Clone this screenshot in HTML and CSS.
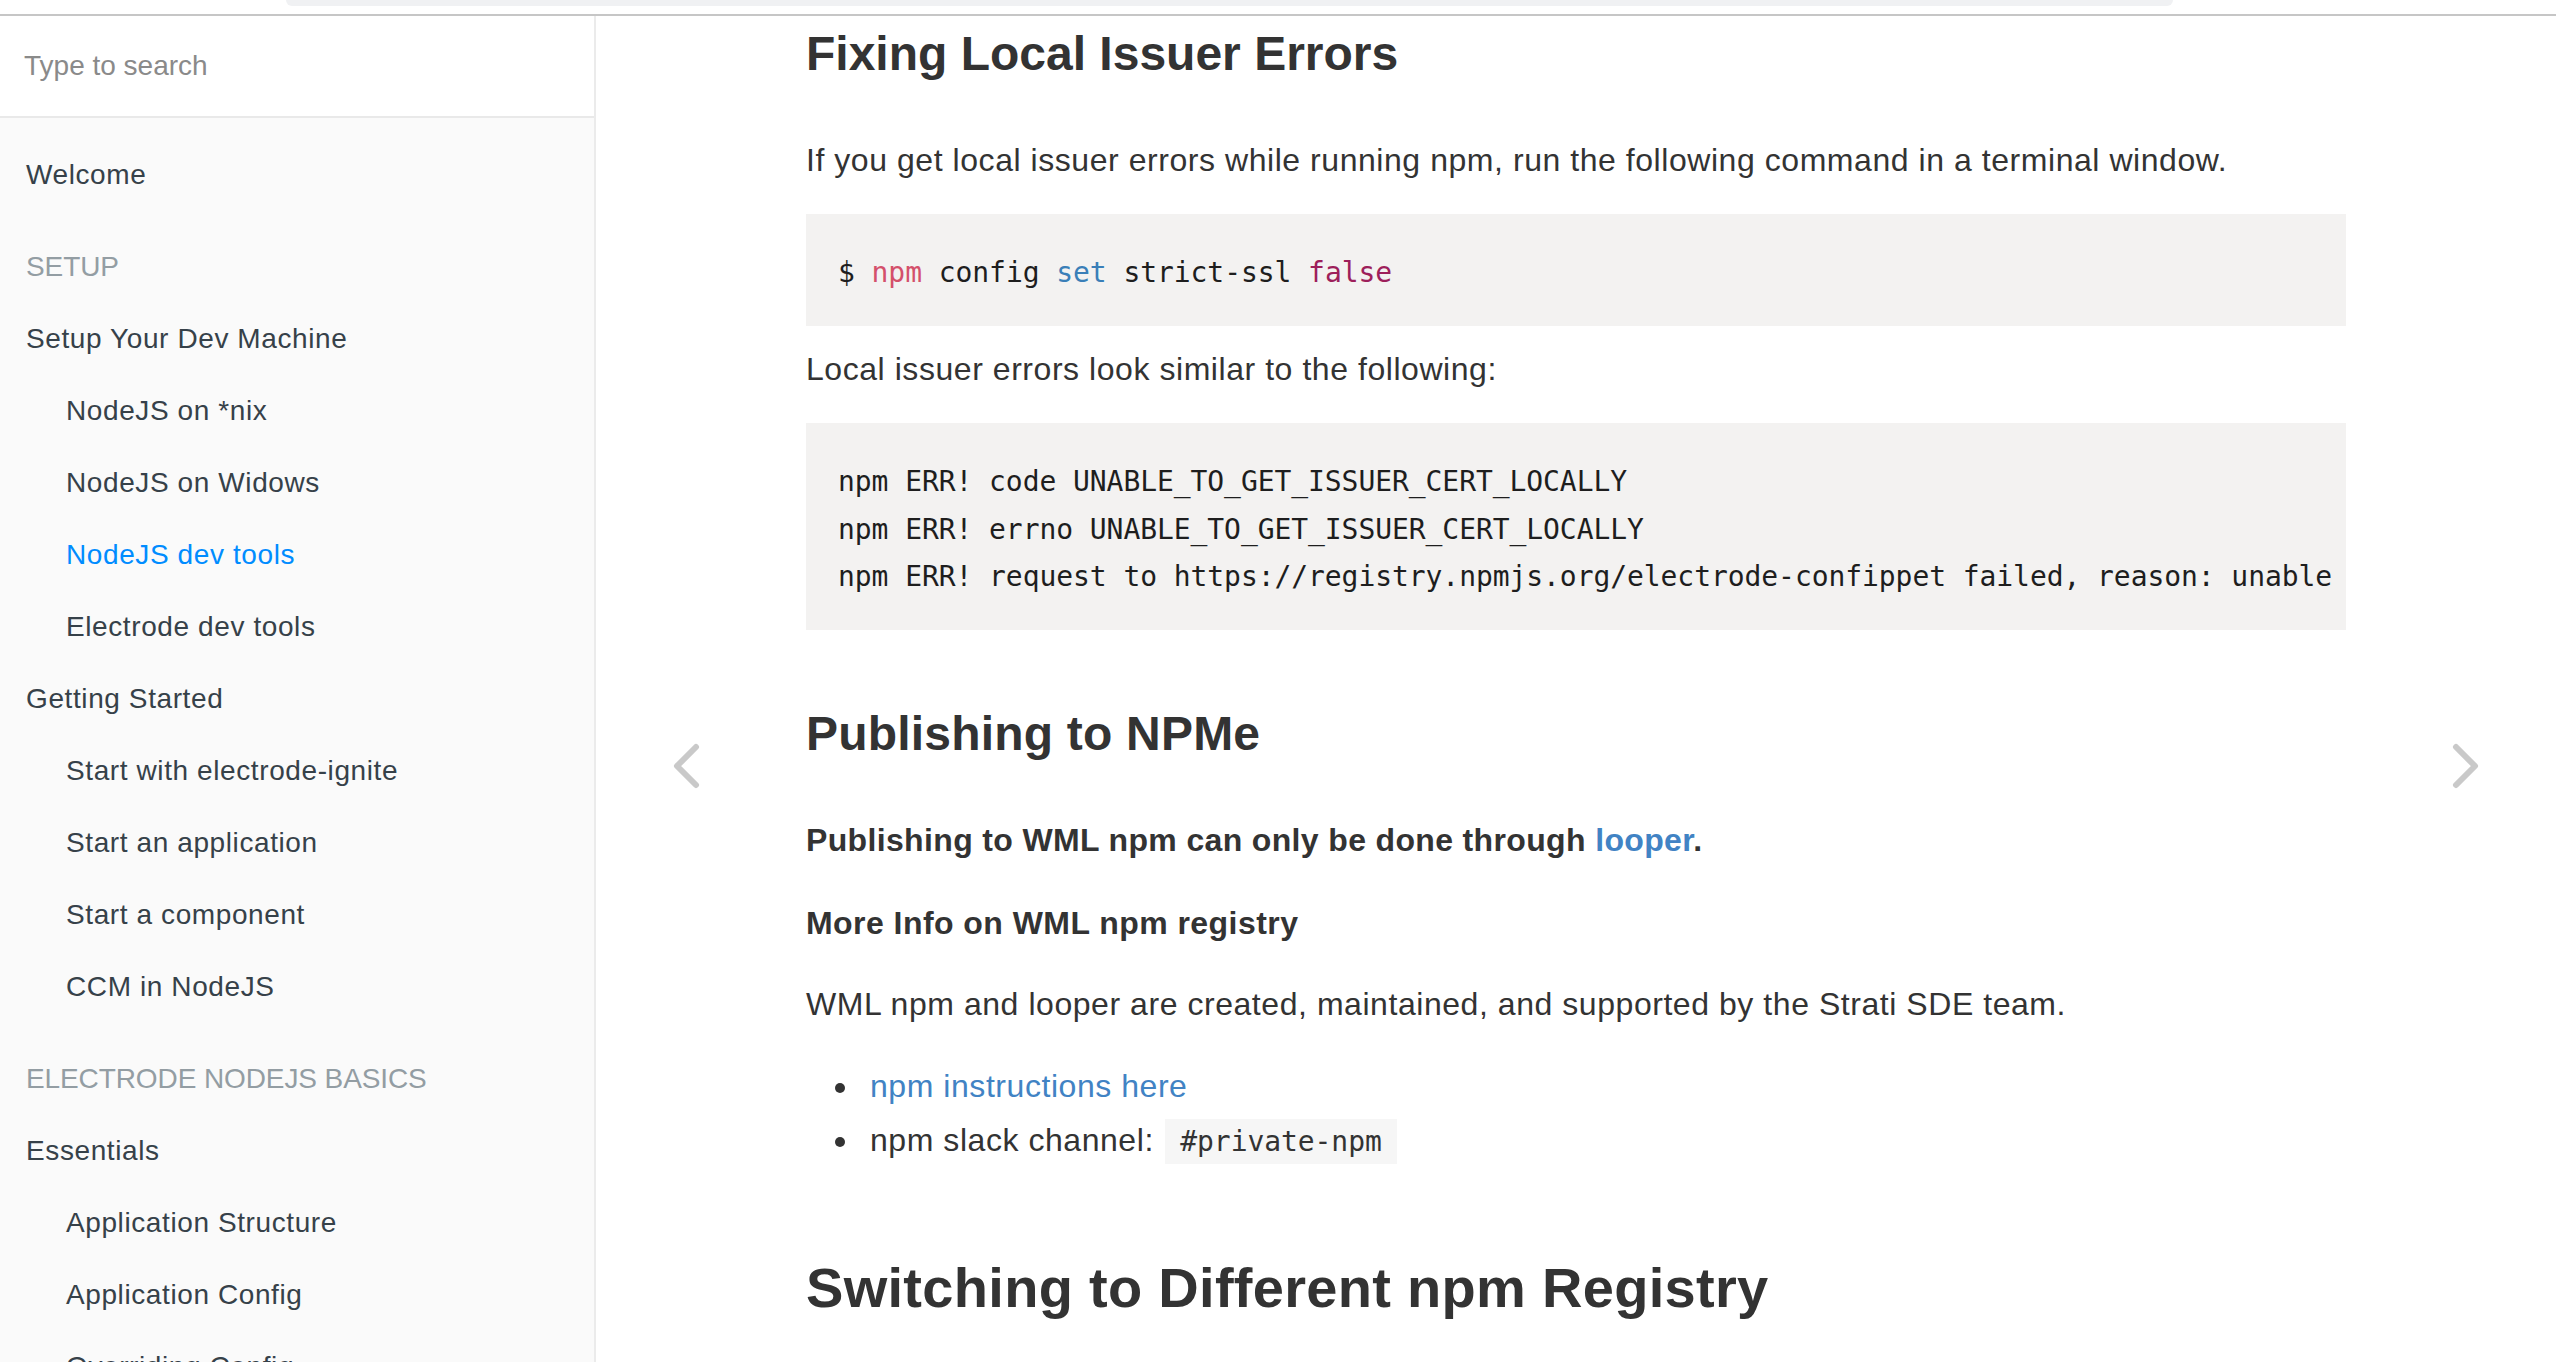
FILE: index.html
```html
<!DOCTYPE html>
<html lang="en">
<head>
<meta charset="utf-8">
<title>Electrode NodeJS - NodeJS dev tools</title>
<link rel="stylesheet" href="styles.css">
</head>
<body>
<div class="topbar"><div class="topbar-tab"></div></div>
<div class="book">
  <aside class="summary">
    <div class="search-box"><span class="search-placeholder">Type to search</span></div>
    <ul class="nav">
      <li class="item">Welcome</li>
      <li class="item header">Setup</li>
      <li class="item">Setup Your Dev Machine</li>
      <li class="item sub">NodeJS on *nix</li>
      <li class="item sub">NodeJS on Widows</li>
      <li class="item sub active">NodeJS dev tools</li>
      <li class="item sub">Electrode dev tools</li>
      <li class="item">Getting Started</li>
      <li class="item sub">Start with electrode-ignite</li>
      <li class="item sub">Start an application</li>
      <li class="item sub">Start a component</li>
      <li class="item sub">CCM in NodeJS</li>
      <li class="item header">Electrode NodeJS Basics</li>
      <li class="item">Essentials</li>
      <li class="item sub">Application Structure</li>
      <li class="item sub">Application Config</li>
      <li class="item sub">Overriding Config</li>
    </ul>
  </aside>
  <main class="book-body">
    <a class="nav-arrow prev" href="#" aria-label="Previous page">
      <svg width="30" height="46" viewBox="0 0 30 46"><polyline points="25,4 6,23 25,42" fill="none" stroke="#c9c9c9" stroke-width="6" stroke-linecap="round" stroke-linejoin="round"/></svg>
    </a>
    <article class="page">
      <h3 class="h3 first">Fixing Local Issuer Errors</h3>
      <p class="para">If you get local issuer errors while running npm, run the following command in a terminal window.</p>
      <pre class="code-block">$ <span class="tok-cmd">npm</span> config <span class="tok-kw">set</span> strict-ssl <span class="tok-lit">false</span></pre>
      <p class="para">Local issuer errors look similar to the following:</p>
      <pre class="code-block">npm ERR! code UNABLE_TO_GET_ISSUER_CERT_LOCALLY
npm ERR! errno UNABLE_TO_GET_ISSUER_CERT_LOCALLY
npm ERR! request to https://registry.npmjs.org/electrode-confippet failed, reason: unable</pre>
      <h3 class="h3">Publishing to NPMe</h3>
      <p class="para"><strong class="strong">Publishing to WML npm can only be done through <a class="link" href="#">looper</a>.</strong></p>
      <h5 class="h5">More Info on WML npm registry</h5>
      <p class="para">WML npm and looper are created, maintained, and supported by the Strati SDE team.</p>
      <ul class="bullets">
        <li class="bullet"><a class="link" href="#">npm instructions here</a></li>
        <li class="bullet">npm slack channel: <code class="inline-code">#private-npm</code></li>
      </ul>
      <h2 class="h2">Switching to Different npm Registry</h2>
    </article>
    <a class="nav-arrow next" href="#" aria-label="Next page">
      <svg width="30" height="46" viewBox="0 0 30 46"><polyline points="5,4 24,23 5,42" fill="none" stroke="#c9c9c9" stroke-width="6" stroke-linecap="round" stroke-linejoin="round"/></svg>
    </a>
  </main>
</div>
</body>
</html>
```

FILE: styles.css
```css
html, body {
  margin: 0;
  padding: 0;
  height: 100%;
  overflow: hidden;
  background: #fff;
}

body {
  font-family: "Liberation Sans", Arial, Helvetica, sans-serif;
  -webkit-font-smoothing: antialiased;
}

/* top strip */
.topbar {
  height: 14px;
  border-bottom: 2px solid #c6c6c6;
  padding-left: 286px;
}

.topbar-tab {
  width: 1887px;
  height: 6px;
  background: #f0f1f3;
  border-radius: 0 0 14px 14px;
}

/* layout */
.book {
  display: flex;
  height: 1346px;
  overflow: hidden;
}

/* sidebar */
.summary {
  flex: none;
  width: 594px;
  background: #fafafa;
  border-right: 2px solid #ebebeb;
  overflow: hidden;
}

.search-box {
  height: 100px;
  background: #fff;
  border-bottom: 2px solid #e9e9e9;
  display: flex;
  align-items: center;
  padding-left: 24px;
}

.search-placeholder {
  font-size: 28px;
  color: #8a8a8a;
}

.nav {
  list-style: none;
  margin: 0;
  padding: 21px 0 0;
}

.item {
  font-size: 28px;
  line-height: 72px;
  height: 72px;
  color: #364149;
  padding-left: 26px;
  white-space: nowrap;
  letter-spacing: 0.6px;
}

.item.sub {
  padding-left: 66px;
}

.item.header {
  margin-top: 20px;
  color: #939da3;
  text-transform: uppercase;
  letter-spacing: -0.1px;
}

.item.active {
  color: #008cff;
}

/* content */
.book-body {
  flex: 1;
  position: relative;
  overflow: hidden;
}

.page {
  width: 1540px;
  margin: 0 auto;
  padding-top: 9px;
  color: #333;
  font-size: 32px;
  line-height: 54.4px;
  letter-spacing: 0.55px;
}

.h3 {
  font-size: 48px;
  line-height: 57.6px;
  font-weight: bold;
  margin: 75px 0 50px;
  color: #333;
  letter-spacing: 0.2px;
}

.h3.first {
  margin-top: 0;
  letter-spacing: 0;
}

.h3.first + .para {
  margin-top: 0;
}

.h2 {
  font-size: 56px;
  line-height: 67.2px;
  font-weight: bold;
  margin: 85px 0 40px;
  color: #333;
  letter-spacing: 0.3px;
}

.h5 {
  font-size: 32px;
  line-height: 54.4px;
  font-weight: bold;
  margin: 29px 0 27px;
  color: #333;
  letter-spacing: 0.45px;
}

.para {
  margin: 0 0 27px;
}

.h3 + .para .strong {
  position: relative;
  top: 1px;
}

.strong {
  font-weight: bold;
  letter-spacing: 0.35px;
}

.link {
  color: #4183c4;
  text-decoration: none;
}

.code-block {
  margin: 0 0 16px;
  padding: 35px 32px 29px;
  background: #f3f2f1;
  font-family: "DejaVu Sans Mono", "Liberation Mono", monospace;
  font-size: 28px;
  line-height: 47.6px;
  letter-spacing: -0.07px;
  color: #1e1e1e;
  white-space: pre;
  overflow: hidden;
}

.tok-cmd {
  color: #d4506b;
}

.tok-kw {
  color: #3a7fb8;
}

.tok-lit {
  color: #9d1f5b;
}

.bullets {
  margin: 0 0 27px;
  padding-left: 64px;
  list-style: none;
}

.bullet {
  position: relative;
  line-height: 54.4px;
}

.bullet::before {
  content: "";
  position: absolute;
  left: -35px;
  top: 24px;
  width: 10px;
  height: 10px;
  border-radius: 50%;
  background: #333;
}

.inline-code {
  font-family: "DejaVu Sans Mono", "Liberation Mono", monospace;
  font-size: 28px;
  letter-spacing: -0.07px;
  background: #f6f6f6;
  padding: 5.6px 15px;
  margin-left: 2px;
  color: #333;
}

/* prev / next arrows overlaying the page body */
.nav-arrow {
  position: absolute;
  top: 154px;
  bottom: 0;
  width: 180px;
  display: flex;
  align-items: center;
  justify-content: center;
}

.nav-arrow.prev {
  left: 0;
}

.nav-arrow.next {
  right: 0;
}
```
